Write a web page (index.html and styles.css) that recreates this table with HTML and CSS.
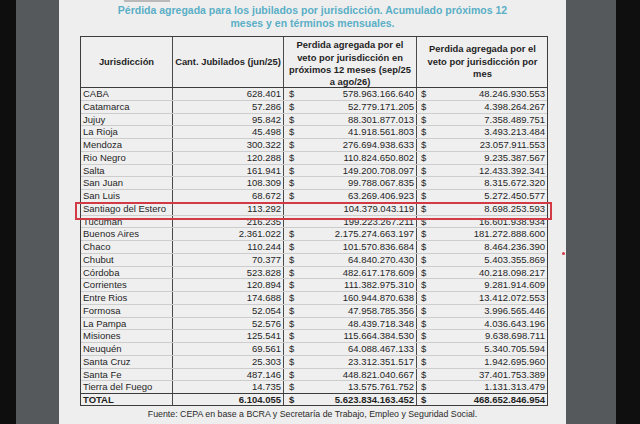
FILE: index.html
```html
<!DOCTYPE html>
<html lang="es">
<head>
<meta charset="utf-8">
<title>Pérdida agregada por jurisdicción</title>
<link rel="stylesheet" href="styles.css">
</head>
<body>
<div class="frame">
  <div class="edge-black-left"></div>
  <div class="edge-gray-left"></div>
  <main class="page">
    <div class="cut-label"></div>
    <h1 class="title">Pérdida agregada para los jubilados por jurisdicción. Acumulado próximos 12<br>meses y en términos mensuales.</h1>
    <div class="table">
      <div class="row head">
        <div class="cell c1">Jurisdicción</div>
        <div class="cell c2">Cant. Jubilados (jun/25)</div>
        <div class="cell c3">Perdida agregada por el veto por jurisdicción en próximos 12 meses (sep/25 a ago/26)</div>
        <div class="cell c4">Perdida agregada por el veto por jurisdicción por mes</div>
      </div>
      <div class="row"><div class="cell c1">CABA</div><div class="cell c2">628.401</div><div class="cell c3"><span>$</span><span>578.963.166.640</span></div><div class="cell c4"><span>$</span><span>48.246.930.553</span></div></div>
      <div class="row"><div class="cell c1">Catamarca</div><div class="cell c2">57.286</div><div class="cell c3"><span>$</span><span>52.779.171.205</span></div><div class="cell c4"><span>$</span><span>4.398.264.267</span></div></div>
      <div class="row"><div class="cell c1">Jujuy</div><div class="cell c2">95.842</div><div class="cell c3"><span>$</span><span>88.301.877.013</span></div><div class="cell c4"><span>$</span><span>7.358.489.751</span></div></div>
      <div class="row"><div class="cell c1">La Rioja</div><div class="cell c2">45.498</div><div class="cell c3"><span>$</span><span>41.918.561.803</span></div><div class="cell c4"><span>$</span><span>3.493.213.484</span></div></div>
      <div class="row"><div class="cell c1">Mendoza</div><div class="cell c2">300.322</div><div class="cell c3"><span>$</span><span>276.694.938.633</span></div><div class="cell c4"><span>$</span><span>23.057.911.553</span></div></div>
      <div class="row"><div class="cell c1">Rio Negro</div><div class="cell c2">120.288</div><div class="cell c3"><span>$</span><span>110.824.650.802</span></div><div class="cell c4"><span>$</span><span>9.235.387.567</span></div></div>
      <div class="row"><div class="cell c1">Salta</div><div class="cell c2">161.941</div><div class="cell c3"><span>$</span><span>149.200.708.097</span></div><div class="cell c4"><span>$</span><span>12.433.392.341</span></div></div>
      <div class="row"><div class="cell c1">San Juan</div><div class="cell c2">108.309</div><div class="cell c3"><span>$</span><span>99.788.067.835</span></div><div class="cell c4"><span>$</span><span>8.315.672.320</span></div></div>
      <div class="row"><div class="cell c1">San Luis</div><div class="cell c2">68.672</div><div class="cell c3"><span>$</span><span>63.269.406.923</span></div><div class="cell c4"><span>$</span><span>5.272.450.577</span></div></div>
      <div class="row"><div class="cell c1">Santiago del Estero</div><div class="cell c2">113.292</div><div class="cell c3"><span></span><span>104.379.043.119</span></div><div class="cell c4"><span>$</span><span>8.698.253.593</span></div></div>
      <div class="row"><div class="cell c1">Tucuman</div><div class="cell c2">216.235</div><div class="cell c3"><span></span><span>199.223.267.211</span></div><div class="cell c4"><span>$</span><span>16.601.938.934</span></div></div>
      <div class="row"><div class="cell c1">Buenos Aires</div><div class="cell c2">2.361.022</div><div class="cell c3"><span>$</span><span>2.175.274.663.197</span></div><div class="cell c4"><span>$</span><span>181.272.888.600</span></div></div>
      <div class="row"><div class="cell c1">Chaco</div><div class="cell c2">110.244</div><div class="cell c3"><span>$</span><span>101.570.836.684</span></div><div class="cell c4"><span>$</span><span>8.464.236.390</span></div></div>
      <div class="row"><div class="cell c1">Chubut</div><div class="cell c2">70.377</div><div class="cell c3"><span>$</span><span>64.840.270.430</span></div><div class="cell c4"><span>$</span><span>5.403.355.869</span></div></div>
      <div class="row"><div class="cell c1">Córdoba</div><div class="cell c2">523.828</div><div class="cell c3"><span>$</span><span>482.617.178.609</span></div><div class="cell c4"><span>$</span><span>40.218.098.217</span></div></div>
      <div class="row"><div class="cell c1">Corrientes</div><div class="cell c2">120.894</div><div class="cell c3"><span>$</span><span>111.382.975.310</span></div><div class="cell c4"><span>$</span><span>9.281.914.609</span></div></div>
      <div class="row"><div class="cell c1">Entre Rios</div><div class="cell c2">174.688</div><div class="cell c3"><span>$</span><span>160.944.870.638</span></div><div class="cell c4"><span>$</span><span>13.412.072.553</span></div></div>
      <div class="row"><div class="cell c1">Formosa</div><div class="cell c2">52.054</div><div class="cell c3"><span>$</span><span>47.958.785.356</span></div><div class="cell c4"><span>$</span><span>3.996.565.446</span></div></div>
      <div class="row"><div class="cell c1">La Pampa</div><div class="cell c2">52.576</div><div class="cell c3"><span>$</span><span>48.439.718.348</span></div><div class="cell c4"><span>$</span><span>4.036.643.196</span></div></div>
      <div class="row"><div class="cell c1">Misiones</div><div class="cell c2">125.541</div><div class="cell c3"><span>$</span><span>115.664.384.530</span></div><div class="cell c4"><span>$</span><span>9.638.698.711</span></div></div>
      <div class="row"><div class="cell c1">Neuquén</div><div class="cell c2">69.561</div><div class="cell c3"><span>$</span><span>64.088.467.133</span></div><div class="cell c4"><span>$</span><span>5.340.705.594</span></div></div>
      <div class="row"><div class="cell c1">Santa Cruz</div><div class="cell c2">25.303</div><div class="cell c3"><span>$</span><span>23.312.351.517</span></div><div class="cell c4"><span>$</span><span>1.942.695.960</span></div></div>
      <div class="row"><div class="cell c1">Santa Fe</div><div class="cell c2">487.146</div><div class="cell c3"><span>$</span><span>448.821.040.667</span></div><div class="cell c4"><span>$</span><span>37.401.753.389</span></div></div>
      <div class="row last"><div class="cell c1">Tierra del Fuego</div><div class="cell c2">14.735</div><div class="cell c3"><span>$</span><span>13.575.761.752</span></div><div class="cell c4"><span>$</span><span>1.131.313.479</span></div></div>
      <div class="row total"><div class="cell c1">TOTAL</div><div class="cell c2">6.104.055</div><div class="cell c3"><span>$</span><span>5.623.834.163.452</span></div><div class="cell c4"><span>$</span><span>468.652.846.954</span></div></div>
      <div class="highlight"></div>
      <div class="dot"></div>
    </div>
    <p class="source">Fuente: CEPA en base a BCRA y Secretaría de Trabajo, Empleo y Seguridad Social.</p>
  </main>
  <div class="edge-gray-right"></div>
  <div class="edge-black-right"></div>
</div>
</body>
</html>
```
FILE: styles.css
```css
* { box-sizing: border-box; }
html, body { margin: 0; padding: 0; }
body {
  width: 640px;
  height: 424px;
  overflow: hidden;
  background: #0e0e0e;
  font-family: "Liberation Sans", Arial, sans-serif;
}
.frame {
  display: flex;
  height: 424px;
}
.edge-black-left { width: 16px; background: #0e0e0e; }
.edge-gray-left { width: 43px; background: #56595b; }
.edge-gray-right { width: 50px; background: #56595b; }
.edge-black-right { width: 24px; background: #0f0f0f; }
.page {
  width: 507px;
  background: #eeeeee;
  padding: 0 0 0 21px;
  display: flex;
  flex-direction: column;
  color: #1f1f1f;
}
.cut-label {
  width: 46px;
  height: 2px;
  margin-left: 44px;
  background: #b9b9b9;
}
.title {
  margin: 2px 0 0 -21px;
  width: 507px;
  text-align: center;
  font-size: 10.5px;
  line-height: 13px;
  font-weight: bold;
  color: #5aaec6;
}
.table {
  position: relative;
  margin-top: 6px;
  width: 468px;
  border: 1px solid #3c3c3c;
  background: #efefef;
}
.row {
  display: grid;
  grid-template-columns: 92px 111px 133px 131px;
  height: 12.75px;
  border-bottom: 1px solid #cdcdcd;
  font-size: 9.5px;
  line-height: 12.5px;
}
.row.head {
  height: 51px;
  border-bottom: 1px solid #3c3c3c;
  font-weight: bold;
  font-size: 9.4px;
  line-height: 12.4px;
}
.row.last { border-bottom: 1px solid #3c3c3c; }
.row.total {
  height: 11px;
  line-height: 11px;
  border-bottom: none;
  font-weight: bold;
}
.cell {
  border-right: 1px solid #4a4a4a;
  white-space: nowrap;
  overflow: hidden;
}
.cell.c4 { border-right: none; }
.cell.c1 { padding-left: 2px; }
.cell.c2 { text-align: right; padding-right: 2px; }
.cell.c3, .cell.c4 {
  display: flex;
  justify-content: space-between;
  padding-left: 5px;
  padding-right: 2px;
}
.cell.c4 { padding-left: 4px; padding-right: 3px; }
.head .cell {
  display: flex;
  align-items: center;
  justify-content: center;
  text-align: center;
  white-space: normal;
  padding: 0 2px;
}
.head .c3 { padding: 4px 3px 0; }
.head .c4 { padding: 0 5px; }
.highlight {
  position: absolute;
  left: -6px;
  right: -5px;
  top: 165px;
  height: 18px;
  border: 2px solid #d23a46;
}
.dot {
  position: absolute;
  left: 481px;
  top: 215px;
  width: 3px;
  height: 3px;
  border-radius: 50%;
  background: #d23a46;
}
.source {
  margin: 3px 0 0 -21px;
  width: 507px;
  text-align: center;
  font-size: 8.8px;
  line-height: 11px;
  color: #2a2a2a;
}
```
